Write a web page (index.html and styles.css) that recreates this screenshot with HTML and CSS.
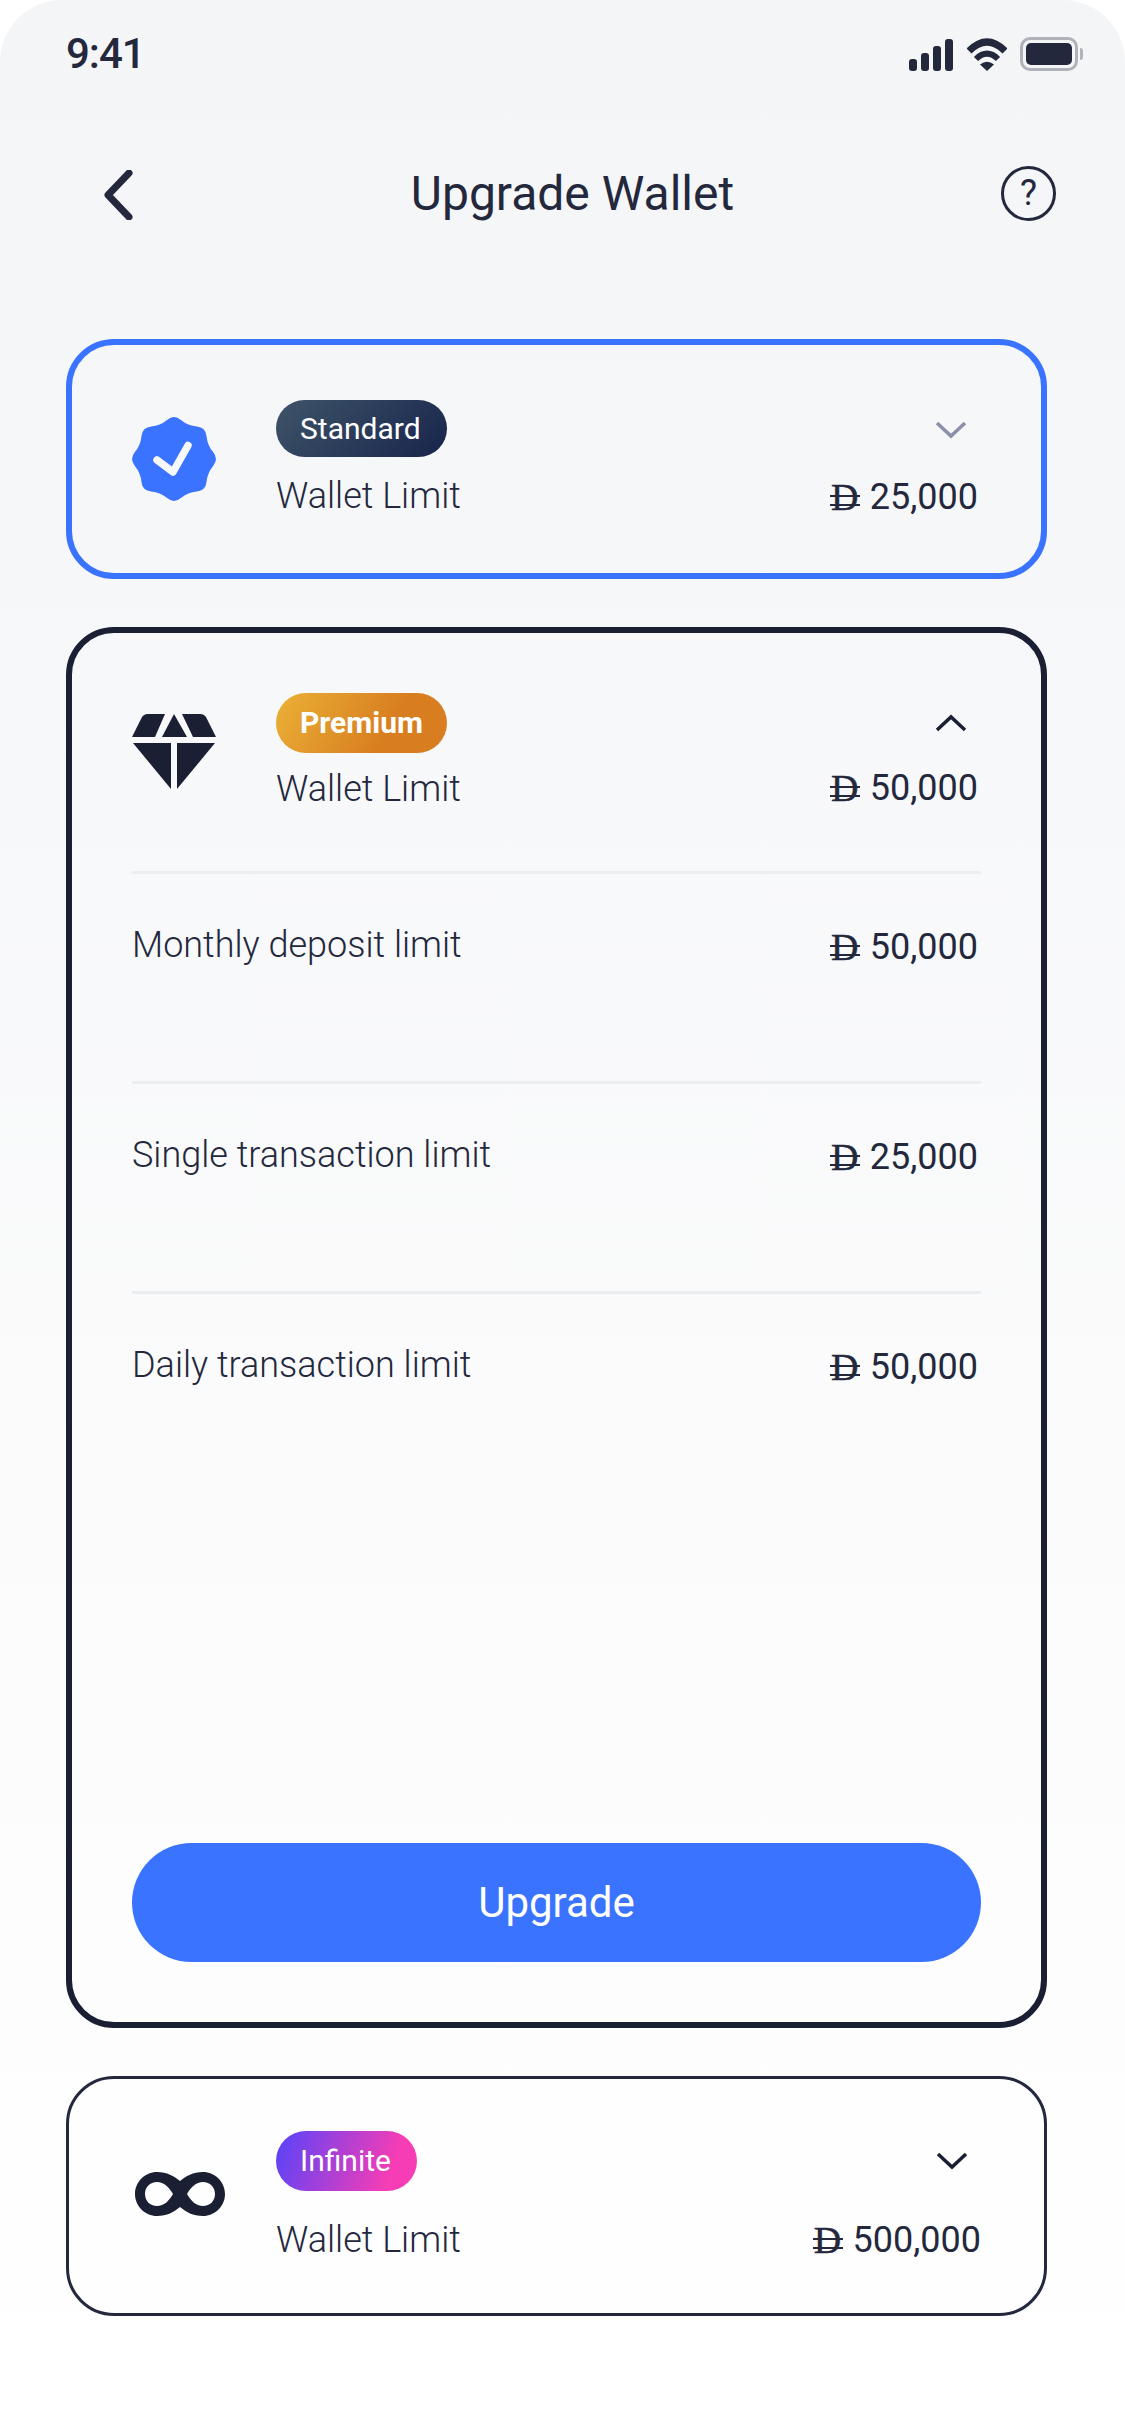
FILE: index.html
```html
<!DOCTYPE html>
<html lang="en">
<head>
<meta charset="utf-8">
<title>Upgrade Wallet</title>
<link rel="stylesheet" href="styles.css">
</head>
<body>
<div class="screen">
  <div class="status">
    <span class="time">9:41</span>
    <div class="status-icons">
      <div class="signal"><i class="b1"></i><i class="b2"></i><i class="b3"></i><i class="b4"></i></div>
      <svg class="wifi" width="40" height="33" viewBox="0 0 40 33"><path d="M2 13Q20-5 38 13" fill="none" stroke="#23283d" stroke-width="7"/><path d="M9 21Q20 10 31 21" fill="none" stroke="#23283d" stroke-width="6"/><path d="M20 33L13 26.500Q20 21 27 26.500Z" fill="#23283d"/></svg>
      <div class="battery"><div class="battery-fill"></div></div>
    </div>
  </div>
  <header class="nav">
    <svg class="back" width="30" height="50" viewBox="0 0 30 50"><path d="M26 3L5 25L26 47" fill="none" stroke="#23283d" stroke-width="7" stroke-linecap="round" stroke-linejoin="round"/></svg>
    <h1 class="title">Upgrade Wallet</h1>
    <div class="help">?</div>
  </header>
  <main class="cards">
    <section class="card card-standard">
      <div class="head">
        <svg class="ico ico-standard" width="84" height="84" viewBox="0 0 84 84"><path fill="#3a73ff" d="M35.100 2.900Q42-2.850 48.900 2.900Q55.850 8.600 64.800 9.450Q73.700 10.300 74.550 19.200Q75.400 28.150 81.100 35.100Q86.850 42 81.100 48.900Q75.400 55.850 74.550 64.800Q73.700 73.700 64.800 74.550Q55.850 75.400 48.900 81.100Q42 86.850 35.100 81.100Q28.150 75.400 19.200 74.550Q10.300 73.700 9.450 64.800Q8.600 55.850 2.900 48.900Q-2.850 42 2.900 35.100Q8.600 28.150 9.450 19.200Q10.300 10.300 19.200 9.450Q28.150 8.600 35.100 2.900Z"/><path d="M25 43L41 55L56 28.500" fill="none" stroke="#f7f8fa" stroke-width="7.500" stroke-linecap="round" stroke-linejoin="round"/></svg>
        <div class="info">
          <span class="badge badge-standard">Standard</span>
          <span class="wallet wallet-standard">Wallet Limit</span>
        </div>
        <div class="side">
          <svg class="chev" width="32" height="18" viewBox="0 0 32 18"><path d="M2 2L16 15L30 2" fill="none" stroke="#8c90a8" stroke-width="3.500"/></svg>
          <span class="amount amount-standard"><span class="cur">D</span>25,000</span>
        </div>
      </div>
    </section>

    <section class="card card-premium">
      <div class="head head-premium">
        <svg class="ico ico-premium" width="84" height="75" viewBox="0 0 84 75"><g fill="#1b1f33"><path d="M0 23L9 5Q11 0 16 0H33L23 23Z"/><path d="M42 0L55 23H30Z"/><path d="M50 0H68Q73 0 75 5L84 23H61Z"/><path d="M1 29H39V75Z"/><path d="M45 29H83L45 75Z"/></g></svg>
        <div class="info">
          <span class="badge badge-premium">Premium</span>
          <span class="wallet wallet-premium">Wallet Limit</span>
        </div>
        <div class="side">
          <svg class="chev" width="32" height="18" viewBox="0 0 32 18"><path d="M2 16L16 3L30 16" fill="none" stroke="#1b1f33" stroke-width="3.500"/></svg>
          <span class="amount amount-premium"><span class="cur">D</span>50,000</span>
        </div>
      </div>
      <div class="rows">
        <div class="row"><span class="row-label">Monthly deposit limit</span><span class="amount"><span class="cur">D</span>50,000</span></div>
        <div class="row"><span class="row-label">Single transaction limit</span><span class="amount"><span class="cur">D</span>25,000</span></div>
        <div class="row"><span class="row-label">Daily transaction limit</span><span class="amount"><span class="cur">D</span>50,000</span></div>
      </div>
      <button class="upgrade">Upgrade</button>
    </section>

    <section class="card card-infinite">
      <div class="head">
        <svg class="ico ico-infinite" width="90" height="44" viewBox="0 0 90 44"><path fill="#1b1f33" fill-rule="evenodd" d="M22 0C32 0 39 4 45 9C51 4 58 0 68 0C80 0 90 10 90 22C90 34 80 44 68 44C58 44 51 40 45 35C39 40 32 44 22 44C10 44 0 34 0 22C0 10 10 0 22 0ZM22 10C15 10 10 15 10 22C10 29 15 34 22 34C29 34 34 29 38 22C34 15 29 10 22 10ZM68 10C61 10 56 15 52 22C56 29 61 34 68 34C75 34 80 29 80 22C80 15 75 10 68 10Z"/></svg>
        <div class="info info-infinite">
          <span class="badge badge-infinite">Infinite</span>
          <span class="wallet wallet-infinite">Wallet Limit</span>
        </div>
        <div class="side">
          <svg class="chev" width="32" height="18" viewBox="0 0 32 18"><path d="M2 2L16 15L30 2" fill="none" stroke="#1b1f33" stroke-width="3.500"/></svg>
          <span class="amount amount-infinite"><span class="cur">D</span>500,000</span>
        </div>
      </div>
    </section>
  </main>
</div>
</body>
</html>
```
FILE: styles.css
```css
* { box-sizing: border-box; }
html, body { margin: 0; padding: 0; background: #fff; }
body { width: 1125px; height: 2436px; overflow: hidden; font-family: Roboto, "Liberation Sans", sans-serif; color: #23283d; }
.screen { width: 1125px; height: 2436px; border-radius: 62px 62px 0 0; background: linear-gradient(180deg, #f4f5f7 0%, #ffffff 100%); }

.status { height: 100px; padding: 30px 42px 0 66px; display: flex; justify-content: space-between; align-items: flex-start; }
.time { font-size: 42px; font-weight: 500; line-height: 48px; letter-spacing: -1px; }
.status-icons { display: flex; align-items: flex-end; padding-top: 7px; }
.signal { display: flex; align-items: flex-end; gap: 4px; width: 44px; height: 32px; }
.signal i { display: block; width: 8px; background: #23283d; border-radius: 3px; }
.b1 { height: 12px; } .b2 { height: 18px; } .b3 { height: 25px; } .b4 { height: 32px; }
.wifi { margin-left: 14px; }
.battery { position: relative; width: 58px; height: 34px; margin-left: 13px; border: 3px solid #b0b2ba; border-radius: 10px; padding: 3px; margin-right: 5px; }
.battery::after { content: ""; position: absolute; right: -8px; top: 8px; width: 3px; height: 12px; background: #b0b2ba; border-radius: 0 3px 3px 0; }
.battery-fill { width: 100%; height: 100%; background: #23283d; border-radius: 5px; }

.nav { height: 239px; display: grid; grid-template-columns: 1fr auto 1fr; align-items: start; padding: 69px 69px 0 89px; }
.back { margin-top: 1px; margin-left: 14px; }
.title { margin: -3px 0 0; font-size: 48px; font-weight: 400; line-height: 56px; }
.help { justify-self: end; width: 55px; height: 55px; margin-top: -3px; border: 3px solid #23283d; border-radius: 50%; font-size: 36px; line-height: 49px; text-align: center; }

.cards { margin-left: 66px; width: 981px; display: flex; flex-direction: column; gap: 48px; }
.card { border-radius: 48px; }
.card-standard { height: 240px; border: 6px solid #3a73ff; padding: 55px 63px 0 60px; }
.card-premium { height: 1401px; border: 6px solid #1b1f33; padding: 60px 60px 60px 60px; display: flex; flex-direction: column; }
.card-infinite { height: 240px; border: 3px solid #23283d; padding: 52px 65px 0 63px; }

.head { display: flex; align-items: flex-start; }
.head-premium { height: 178px; padding-right: 3px; }
.ico { flex: none; }
.ico-standard { margin-top: 17px; margin-right: 60px; }
.ico-premium { margin-top: 21px; margin-right: 60px; }
.ico-infinite { margin-top: 41px; margin-left: 3px; margin-right: 51px; }
.info { display: flex; flex-direction: column; align-items: flex-start; flex: 1; }
.badge { display: block; border-radius: 30px; color: #fff; font-size: 30px; white-space: nowrap; padding: 0 24px; }
.badge-standard { height: 57px; line-height: 58px; width: 171px; background: linear-gradient(135deg, #3e5469, #18244b); }
.badge-premium { height: 60px; line-height: 60px; width: 171px; font-weight: 700; background: linear-gradient(120deg, #ebb136 0%, #d87e20 65%); }
.badge-infinite { height: 60px; line-height: 60px; width: 141px; background: linear-gradient(110deg, #5643fa 0%, #f63db5 80%); }
.wallet { display: block; font-size: 36px; font-weight: 300; line-height: 42px; }
.wallet-standard { margin-top: 18px; }
.wallet-premium { margin-top: 15px; }
.wallet-infinite { margin-top: 28px; }
.side { display: flex; flex-direction: column; align-items: flex-end; }
.chev { margin-right: 11px; margin-top: 21px; }
.amount { display: flex; align-items: center; font-size: 36px; line-height: 42px; white-space: nowrap; }
.amount-standard { margin-top: 37px; }
.amount-premium { margin-top: 35px; }
.amount-infinite { margin-top: 49px; margin-right: -2px; }
.cur { position: relative; width: 30px; margin-right: 10px; font-family: "Liberation Serif", serif; font-size: 38px; text-align: center; -webkit-text-stroke: 0.5px #23283d; }
.cur::after { content: ""; position: absolute; left: 0; right: 0; top: 19px; height: 7px; border-top: 2px solid #23283d; border-bottom: 2px solid #23283d; }

.rows { display: flex; flex-direction: column; }
.row { height: 210px; border-top: 3px solid #ecedf0; padding: 50px 3px 0 0; display: flex; justify-content: space-between; align-items: flex-start; }
.row .amount { margin-top: 2px; }
.row-label { font-size: 36px; font-weight: 300; line-height: 42px; }

.upgrade { display: block; margin-top: auto; width: 849px; height: 119px; border: 0; border-radius: 60px; background: #3a73ff; color: #fff; font-family: Roboto, "Liberation Sans", sans-serif; font-size: 42px; font-weight: 400; }
```
